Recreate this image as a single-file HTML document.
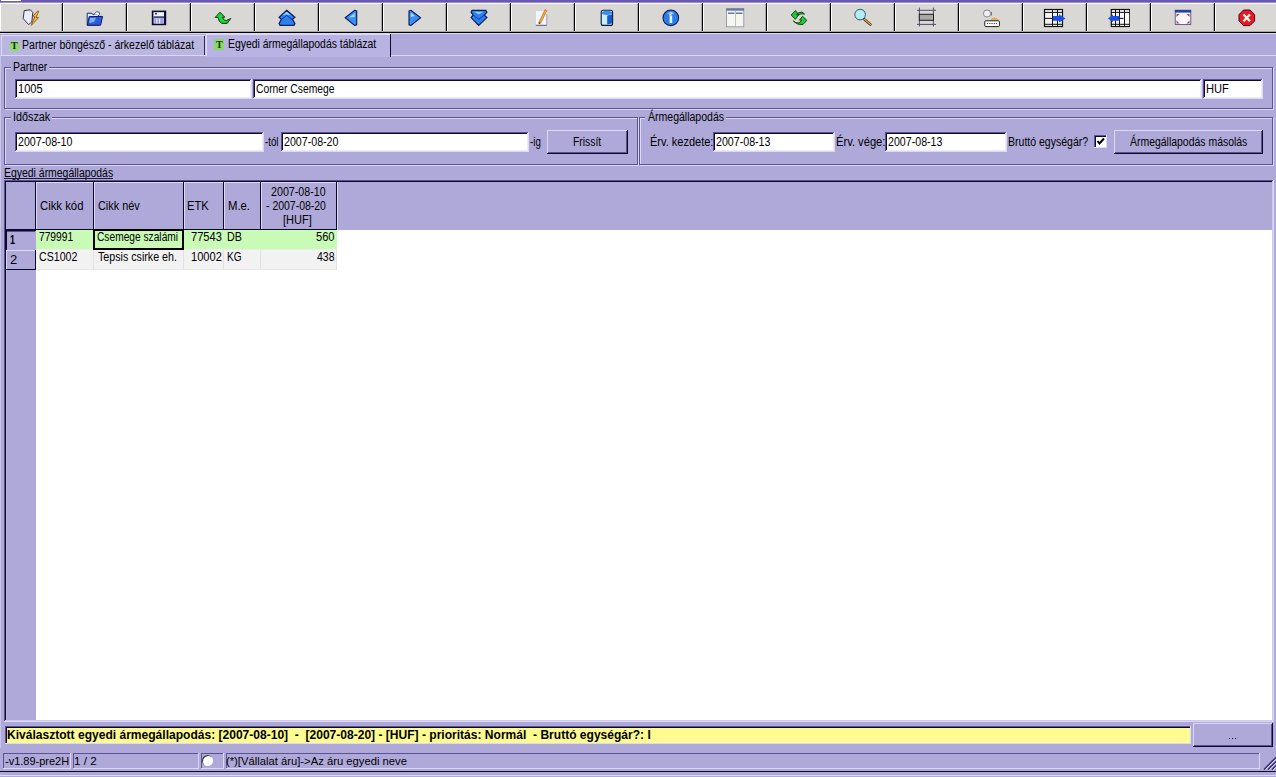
<!DOCTYPE html>
<html><head><meta charset="utf-8"><style>
html,body{margin:0;padding:0}
body{width:1276px;height:777px;position:relative;overflow:hidden;background:#aea9d9;font-family:"Liberation Sans", sans-serif;font-size:12px;color:#000}
body>div,body>span,body>svg{position:absolute}
.t{white-space:pre;line-height:14px;transform-origin:0 0}
</style></head><body>
<div style="left:0px;top:0px;width:1276px;height:2px;background:#6a58b8;"></div>
<div style="left:0px;top:2px;width:1276px;height:1px;background:#9a8ad0;"></div>
<div style="left:1px;top:0px;width:20px;height:1px;background:#ffffff;"></div>
<div style="left:2px;top:1px;width:20px;height:1px;background:#6e6a80;"></div>
<div style="left:0px;top:3px;width:63px;height:30px;background:#d9d8d5;"></div>
<div style="left:0px;top:3px;width:63px;height:1px;background:#ffffff;"></div>
<div style="left:0px;top:3px;width:1px;height:29px;background:#ffffff;"></div>
<div style="left:61px;top:4px;width:1px;height:28px;background:#a8a8a8;"></div>
<div style="left:62px;top:3px;width:1px;height:30px;background:#000;"></div>
<div style="left:0px;top:31px;width:63px;height:1px;background:#a8a8a8;"></div>
<div style="left:0px;top:32px;width:63px;height:1px;background:#000;"></div>
<div style="left:63px;top:3px;width:64px;height:30px;background:#d9d8d5;"></div>
<div style="left:63px;top:3px;width:64px;height:1px;background:#ffffff;"></div>
<div style="left:63px;top:3px;width:1px;height:29px;background:#ffffff;"></div>
<div style="left:125px;top:4px;width:1px;height:28px;background:#a8a8a8;"></div>
<div style="left:126px;top:3px;width:1px;height:30px;background:#000;"></div>
<div style="left:63px;top:31px;width:64px;height:1px;background:#a8a8a8;"></div>
<div style="left:63px;top:32px;width:64px;height:1px;background:#000;"></div>
<div style="left:127px;top:3px;width:64px;height:30px;background:#d9d8d5;"></div>
<div style="left:127px;top:3px;width:64px;height:1px;background:#ffffff;"></div>
<div style="left:127px;top:3px;width:1px;height:29px;background:#ffffff;"></div>
<div style="left:189px;top:4px;width:1px;height:28px;background:#a8a8a8;"></div>
<div style="left:190px;top:3px;width:1px;height:30px;background:#000;"></div>
<div style="left:127px;top:31px;width:64px;height:1px;background:#a8a8a8;"></div>
<div style="left:127px;top:32px;width:64px;height:1px;background:#000;"></div>
<div style="left:191px;top:3px;width:64px;height:30px;background:#d9d8d5;"></div>
<div style="left:191px;top:3px;width:64px;height:1px;background:#ffffff;"></div>
<div style="left:191px;top:3px;width:1px;height:29px;background:#ffffff;"></div>
<div style="left:253px;top:4px;width:1px;height:28px;background:#a8a8a8;"></div>
<div style="left:254px;top:3px;width:1px;height:30px;background:#000;"></div>
<div style="left:191px;top:31px;width:64px;height:1px;background:#a8a8a8;"></div>
<div style="left:191px;top:32px;width:64px;height:1px;background:#000;"></div>
<div style="left:255px;top:3px;width:64px;height:30px;background:#d9d8d5;"></div>
<div style="left:255px;top:3px;width:64px;height:1px;background:#ffffff;"></div>
<div style="left:255px;top:3px;width:1px;height:29px;background:#ffffff;"></div>
<div style="left:317px;top:4px;width:1px;height:28px;background:#a8a8a8;"></div>
<div style="left:318px;top:3px;width:1px;height:30px;background:#000;"></div>
<div style="left:255px;top:31px;width:64px;height:1px;background:#a8a8a8;"></div>
<div style="left:255px;top:32px;width:64px;height:1px;background:#000;"></div>
<div style="left:319px;top:3px;width:64px;height:30px;background:#d9d8d5;"></div>
<div style="left:319px;top:3px;width:64px;height:1px;background:#ffffff;"></div>
<div style="left:319px;top:3px;width:1px;height:29px;background:#ffffff;"></div>
<div style="left:381px;top:4px;width:1px;height:28px;background:#a8a8a8;"></div>
<div style="left:382px;top:3px;width:1px;height:30px;background:#000;"></div>
<div style="left:319px;top:31px;width:64px;height:1px;background:#a8a8a8;"></div>
<div style="left:319px;top:32px;width:64px;height:1px;background:#000;"></div>
<div style="left:383px;top:3px;width:64px;height:30px;background:#d9d8d5;"></div>
<div style="left:383px;top:3px;width:64px;height:1px;background:#ffffff;"></div>
<div style="left:383px;top:3px;width:1px;height:29px;background:#ffffff;"></div>
<div style="left:445px;top:4px;width:1px;height:28px;background:#a8a8a8;"></div>
<div style="left:446px;top:3px;width:1px;height:30px;background:#000;"></div>
<div style="left:383px;top:31px;width:64px;height:1px;background:#a8a8a8;"></div>
<div style="left:383px;top:32px;width:64px;height:1px;background:#000;"></div>
<div style="left:447px;top:3px;width:64px;height:30px;background:#d9d8d5;"></div>
<div style="left:447px;top:3px;width:64px;height:1px;background:#ffffff;"></div>
<div style="left:447px;top:3px;width:1px;height:29px;background:#ffffff;"></div>
<div style="left:509px;top:4px;width:1px;height:28px;background:#a8a8a8;"></div>
<div style="left:510px;top:3px;width:1px;height:30px;background:#000;"></div>
<div style="left:447px;top:31px;width:64px;height:1px;background:#a8a8a8;"></div>
<div style="left:447px;top:32px;width:64px;height:1px;background:#000;"></div>
<div style="left:511px;top:3px;width:64px;height:30px;background:#d9d8d5;"></div>
<div style="left:511px;top:3px;width:64px;height:1px;background:#ffffff;"></div>
<div style="left:511px;top:3px;width:1px;height:29px;background:#ffffff;"></div>
<div style="left:573px;top:4px;width:1px;height:28px;background:#a8a8a8;"></div>
<div style="left:574px;top:3px;width:1px;height:30px;background:#000;"></div>
<div style="left:511px;top:31px;width:64px;height:1px;background:#a8a8a8;"></div>
<div style="left:511px;top:32px;width:64px;height:1px;background:#000;"></div>
<div style="left:575px;top:3px;width:64px;height:30px;background:#d9d8d5;"></div>
<div style="left:575px;top:3px;width:64px;height:1px;background:#ffffff;"></div>
<div style="left:575px;top:3px;width:1px;height:29px;background:#ffffff;"></div>
<div style="left:637px;top:4px;width:1px;height:28px;background:#a8a8a8;"></div>
<div style="left:638px;top:3px;width:1px;height:30px;background:#000;"></div>
<div style="left:575px;top:31px;width:64px;height:1px;background:#a8a8a8;"></div>
<div style="left:575px;top:32px;width:64px;height:1px;background:#000;"></div>
<div style="left:639px;top:3px;width:64px;height:30px;background:#d9d8d5;"></div>
<div style="left:639px;top:3px;width:64px;height:1px;background:#ffffff;"></div>
<div style="left:639px;top:3px;width:1px;height:29px;background:#ffffff;"></div>
<div style="left:701px;top:4px;width:1px;height:28px;background:#a8a8a8;"></div>
<div style="left:702px;top:3px;width:1px;height:30px;background:#000;"></div>
<div style="left:639px;top:31px;width:64px;height:1px;background:#a8a8a8;"></div>
<div style="left:639px;top:32px;width:64px;height:1px;background:#000;"></div>
<div style="left:703px;top:3px;width:64px;height:30px;background:#d9d8d5;"></div>
<div style="left:703px;top:3px;width:64px;height:1px;background:#ffffff;"></div>
<div style="left:703px;top:3px;width:1px;height:29px;background:#ffffff;"></div>
<div style="left:765px;top:4px;width:1px;height:28px;background:#a8a8a8;"></div>
<div style="left:766px;top:3px;width:1px;height:30px;background:#000;"></div>
<div style="left:703px;top:31px;width:64px;height:1px;background:#a8a8a8;"></div>
<div style="left:703px;top:32px;width:64px;height:1px;background:#000;"></div>
<div style="left:767px;top:3px;width:64px;height:30px;background:#d9d8d5;"></div>
<div style="left:767px;top:3px;width:64px;height:1px;background:#ffffff;"></div>
<div style="left:767px;top:3px;width:1px;height:29px;background:#ffffff;"></div>
<div style="left:829px;top:4px;width:1px;height:28px;background:#a8a8a8;"></div>
<div style="left:830px;top:3px;width:1px;height:30px;background:#000;"></div>
<div style="left:767px;top:31px;width:64px;height:1px;background:#a8a8a8;"></div>
<div style="left:767px;top:32px;width:64px;height:1px;background:#000;"></div>
<div style="left:831px;top:3px;width:64px;height:30px;background:#d9d8d5;"></div>
<div style="left:831px;top:3px;width:64px;height:1px;background:#ffffff;"></div>
<div style="left:831px;top:3px;width:1px;height:29px;background:#ffffff;"></div>
<div style="left:893px;top:4px;width:1px;height:28px;background:#a8a8a8;"></div>
<div style="left:894px;top:3px;width:1px;height:30px;background:#000;"></div>
<div style="left:831px;top:31px;width:64px;height:1px;background:#a8a8a8;"></div>
<div style="left:831px;top:32px;width:64px;height:1px;background:#000;"></div>
<div style="left:895px;top:3px;width:64px;height:30px;background:#d9d8d5;"></div>
<div style="left:895px;top:3px;width:64px;height:1px;background:#ffffff;"></div>
<div style="left:895px;top:3px;width:1px;height:29px;background:#ffffff;"></div>
<div style="left:957px;top:4px;width:1px;height:28px;background:#a8a8a8;"></div>
<div style="left:958px;top:3px;width:1px;height:30px;background:#000;"></div>
<div style="left:895px;top:31px;width:64px;height:1px;background:#a8a8a8;"></div>
<div style="left:895px;top:32px;width:64px;height:1px;background:#000;"></div>
<div style="left:959px;top:3px;width:64px;height:30px;background:#d9d8d5;"></div>
<div style="left:959px;top:3px;width:64px;height:1px;background:#ffffff;"></div>
<div style="left:959px;top:3px;width:1px;height:29px;background:#ffffff;"></div>
<div style="left:1021px;top:4px;width:1px;height:28px;background:#a8a8a8;"></div>
<div style="left:1022px;top:3px;width:1px;height:30px;background:#000;"></div>
<div style="left:959px;top:31px;width:64px;height:1px;background:#a8a8a8;"></div>
<div style="left:959px;top:32px;width:64px;height:1px;background:#000;"></div>
<div style="left:1023px;top:3px;width:64px;height:30px;background:#d9d8d5;"></div>
<div style="left:1023px;top:3px;width:64px;height:1px;background:#ffffff;"></div>
<div style="left:1023px;top:3px;width:1px;height:29px;background:#ffffff;"></div>
<div style="left:1085px;top:4px;width:1px;height:28px;background:#a8a8a8;"></div>
<div style="left:1086px;top:3px;width:1px;height:30px;background:#000;"></div>
<div style="left:1023px;top:31px;width:64px;height:1px;background:#a8a8a8;"></div>
<div style="left:1023px;top:32px;width:64px;height:1px;background:#000;"></div>
<div style="left:1087px;top:3px;width:64px;height:30px;background:#d9d8d5;"></div>
<div style="left:1087px;top:3px;width:64px;height:1px;background:#ffffff;"></div>
<div style="left:1087px;top:3px;width:1px;height:29px;background:#ffffff;"></div>
<div style="left:1149px;top:4px;width:1px;height:28px;background:#a8a8a8;"></div>
<div style="left:1150px;top:3px;width:1px;height:30px;background:#000;"></div>
<div style="left:1087px;top:31px;width:64px;height:1px;background:#a8a8a8;"></div>
<div style="left:1087px;top:32px;width:64px;height:1px;background:#000;"></div>
<div style="left:1151px;top:3px;width:64px;height:30px;background:#d9d8d5;"></div>
<div style="left:1151px;top:3px;width:64px;height:1px;background:#ffffff;"></div>
<div style="left:1151px;top:3px;width:1px;height:29px;background:#ffffff;"></div>
<div style="left:1213px;top:4px;width:1px;height:28px;background:#a8a8a8;"></div>
<div style="left:1214px;top:3px;width:1px;height:30px;background:#000;"></div>
<div style="left:1151px;top:31px;width:64px;height:1px;background:#a8a8a8;"></div>
<div style="left:1151px;top:32px;width:64px;height:1px;background:#000;"></div>
<div style="left:1215px;top:3px;width:62px;height:30px;background:#d9d8d5;"></div>
<div style="left:1215px;top:3px;width:62px;height:1px;background:#ffffff;"></div>
<div style="left:1215px;top:3px;width:1px;height:29px;background:#ffffff;"></div>
<div style="left:1215px;top:31px;width:62px;height:1px;background:#a8a8a8;"></div>
<div style="left:1215px;top:32px;width:62px;height:1px;background:#000;"></div>
<svg style="left:18px;top:4px;width:24px;height:24px" viewBox="0 0 24 24"><path d="M6.2 6.6 L12.3 5.8 L14.8 8.4 L13.8 18 L10.6 20.6 L5.2 14.6 Z" fill="#ecebfa" stroke="#30305a" stroke-width="1"/>
<path d="M19.8 6.8 L14.3 12.6 L16.8 12.8 L13.2 21.4 L20.6 13.6 L18 13.3 L20.8 7.5 Z" fill="#f2b234" stroke="#8a4a10" stroke-width="0.8"/></svg>
<svg style="left:82px;top:4px;width:24px;height:24px" viewBox="0 0 24 24"><path d="M5.2 9.2 L9.8 9.2 L10.6 10.4 L16.4 10.4 L16.4 21.2 L5.2 21.2 Z" fill="#d8ecff" stroke="#1a2a66" stroke-width="1"/>
<path d="M12 10.4 Q14 6.5 17 8 L17.8 11" fill="#ffffff" stroke="#30305a" stroke-width="0.8"/>
<path d="M7.2 12.6 L20.6 12.4 L18.6 21.2 L5.4 21.2 Z" fill="#2c5ad8" stroke="#0a1a70" stroke-width="1"/>
<path d="M8 14 L14 13.8 L12 18 L7 19 Z" fill="#7fb0f5"/></svg>
<svg style="left:146px;top:4px;width:24px;height:24px" viewBox="0 0 24 24"><rect x="6.6" y="7.4" width="12.8" height="13" fill="#b8bce0" stroke="#0a0a28" stroke-width="1.6"/>
<rect x="7.8" y="8.4" width="10.4" height="4" fill="#f0f4ff"/>
<rect x="7.8" y="12.4" width="10.4" height="1.4" fill="#30305a"/>
<rect x="8.6" y="14.2" width="8.8" height="5.4" fill="#9ea2d8"/>
<rect x="10.2" y="14.5" width="1.2" height="5" fill="#e8e8ff"/><rect x="13" y="14.5" width="1.2" height="5" fill="#e8e8ff"/>
<rect x="18" y="8" width="1.6" height="12.6" fill="#0a0a40"/>
<circle cx="10" cy="9.8" r="1" fill="#303050"/></svg>
<svg style="left:210px;top:4px;width:24px;height:24px" viewBox="0 0 24 24"><path d="M5.2 13.4 L10 8.2 L14.8 13.2 L12.6 13.4 Q13 16.6 16.4 16.6 L20.8 14.4 L17.2 19.4 L11.6 19.4 Q8.6 17.4 8 13.4 Z" fill="#22d040" stroke="#063a0a" stroke-width="1"/></svg>
<svg style="left:274px;top:4px;width:24px;height:24px" viewBox="0 0 24 24"><path d="M12.7 6.2 L20.9 13.2 L18.4 15.4 L20.9 19.6 L20 21.3 L6 21.3 L5.1 19.6 L7.2 15.4 L5.1 13.2 Z" fill="#2e7ff0" stroke="#0a1e5a" stroke-width="1.2"/>
<path d="M7.4 15.6 L12.7 11.4 L18.2 15.6" fill="none" stroke="#0a3a9a" stroke-width="1"/>
<path d="M12.7 7.8 L17 11.6 L12.7 10.2 L8.4 11.6 Z" fill="#a8dcff"/></svg>
<svg style="left:338px;top:4px;width:24px;height:24px" viewBox="0 0 24 24"><path d="M7.2 13.8 L16.6 6.3 L18.7 7 L18.7 20.8 L16.6 21.4 Z" fill="#3a8ef2" stroke="#071a5c" stroke-width="1.1"/>
<path d="M11 13.5 L16.8 9 L16.8 13 Z" fill="#9ed4ff"/></svg>
<svg style="left:402px;top:4px;width:24px;height:24px" viewBox="0 0 24 24"><path d="M7 7 L9 6.3 L18.6 13.8 L9 21.4 L7 20.8 Z" fill="#3a8ef2" stroke="#071a5c" stroke-width="1.1"/>
<path d="M8.8 8.5 L13 12 L8.8 13 Z" fill="#a8dcff"/></svg>
<svg style="left:466px;top:4px;width:24px;height:24px" viewBox="0 0 24 24"><path d="M6 6.4 L19.8 6.4 L20.9 8.2 L18.4 11.2 L20.9 13.6 L12.7 21.4 L5.1 13.6 L7.2 11.2 L5.1 8.2 Z" fill="#2e7ff0" stroke="#0a1e5a" stroke-width="1.2"/>
<path d="M7.4 11.2 L12.7 15.4 L18.2 11.2" fill="none" stroke="#0a3a9a" stroke-width="1"/>
<path d="M8 7.8 L17.5 7.8 L12.7 10.6 Z" fill="#8cc8ff"/></svg>
<svg style="left:530px;top:4px;width:24px;height:24px" viewBox="0 0 24 24"><rect x="6" y="7" width="11" height="14.5" fill="#f4f6ff"/>
<rect x="5.8" y="20.8" width="11" height="1" fill="#50507a"/>
<rect x="16.4" y="10" width="0.8" height="11" fill="#8888a8"/>
<path d="M15 5.6 L17 6.6 L10.5 19.4 L8.8 19.8 L9 18 Z" fill="#f0a838" stroke="#b86a18" stroke-width="0.6"/>
<circle cx="9.4" cy="19" r="0.8" fill="#404040"/></svg>
<svg style="left:594px;top:4px;width:24px;height:24px" viewBox="0 0 24 24"><rect x="7.2" y="6.2" width="11.4" height="15.2" rx="2" fill="#c8f0ff" stroke="#101838" stroke-width="1.1"/>
<path d="M8 8 Q13 5.5 18 8 L18 10 Q13 12 8 10 Z" fill="#3c8ef0"/>
<path d="M13.2 11.5 L18 10.5 L18 19.5 L13.2 20.5 Z" fill="#1a5ad0"/></svg>
<svg style="left:658px;top:4px;width:24px;height:24px" viewBox="0 0 24 24"><circle cx="12.8" cy="13.8" r="7.8" fill="#2f7ee8" stroke="#071a5c" stroke-width="1.1"/>
<path d="M9 10 Q12.8 6 16.5 10 Q12.8 8.5 9 10 Z" fill="#b8e4ff"/>
<rect x="11.6" y="11.5" width="2.6" height="7.5" fill="#e8f6ff"/>
<path d="M11.2 11.2 L14.4 9.2" stroke="#e8f6ff" stroke-width="1.2"/></svg>
<svg style="left:722px;top:4px;width:24px;height:24px" viewBox="0 0 24 24"><rect x="4.4" y="4.6" width="17.4" height="18.2" fill="#f6f6f0" stroke="#8a8aa8" stroke-width="0.8"/>
<rect x="4.2" y="4.5" width="17.8" height="2.2" fill="#6a74b0"/>
<rect x="6" y="8.6" width="6.5" height="1.2" fill="#4a5a70"/><rect x="14" y="8.6" width="6.5" height="1.2" fill="#4a5a70"/>
<rect x="13" y="7" width="0.8" height="15.5" fill="#b0b8c0"/></svg>
<svg style="left:786px;top:4px;width:24px;height:24px" viewBox="0 0 24 24"><path d="M5.2 11 L9.5 6.5 L12.5 10.6 L10.6 11 Q11 8.5 16 8 L18.5 10 Q14 9 12.2 11.5 L9.3 15.3 Z" fill="#22c83a" stroke="#063a0a" stroke-width="0.9"/>
<path d="M20.8 16.3 L16.5 12.3 L13.5 16 L15.5 16 Q15 19 10 19 L7.3 17 Q11.5 21.5 17 20.5 Z" fill="#22c83a" stroke="#063a0a" stroke-width="0.9"/></svg>
<svg style="left:850px;top:4px;width:24px;height:24px" viewBox="0 0 24 24"><circle cx="10.1" cy="10.6" r="5.3" fill="#b4ecf4" stroke="#2a5a6a" stroke-width="1"/>
<path d="M14.5 15.4 L20.4 20.4" stroke="#4a3010" stroke-width="2.6" stroke-linecap="round"/>
<path d="M14.5 15.4 L20.4 20.4" stroke="#e8b860" stroke-width="1.2" stroke-linecap="round"/></svg>
<svg style="left:914px;top:4px;width:24px;height:24px" viewBox="0 0 24 24"><path d="M5.4 3.6 L5.4 22.4 M19.4 3.6 L19.4 22.4 M3 6.3 L22 6.3 M3 20.4 L22 20.4" stroke="#505068" stroke-width="1"/>
<rect x="5.3" y="10.3" width="14.2" height="6" fill="#a8a8a8" stroke="#202020" stroke-width="1"/></svg>
<svg style="left:978px;top:4px;width:24px;height:24px" viewBox="0 0 24 24"><circle cx="9" cy="9.5" r="3.6" fill="#f0f0f0" stroke="#707080" stroke-width="0.8"/>
<path d="M13.4 8 L13.4 11.5" stroke="#505060" stroke-width="0.8"/>
<path d="M12 16 Q16 11 21 16 Z" fill="#e8a848"/>
<rect x="6.8" y="16.8" width="14.6" height="5.8" rx="1" fill="#ffffff" stroke="#202020" stroke-width="1"/>
<path d="M9 19.5 L19 19.5" stroke="#404040" stroke-width="1" stroke-dasharray="1.2 1"/></svg>
<svg style="left:1042px;top:4px;width:24px;height:24px" viewBox="0 0 24 24"><rect x="2.5" y="5.5" width="18" height="17" fill="#f4f4f4" stroke="#101010" stroke-width="1.2"/>
<path d="M10.5 5.5 L10.5 22.5 M15.5 5.5 L15.5 22.5 M2.5 8.4 L20.5 8.4 M2.5 14.4 L20.5 14.4 M2.5 20.3 L20.5 20.3" stroke="#101010" stroke-width="1"/>
<path d="M10.8 12 L17 12 L17 10.2 L23.6 14.4 L17 18.6 L17 16.8 L10.8 16.8 Z" fill="#1a50e8"/></svg>
<svg style="left:1106px;top:4px;width:24px;height:24px" viewBox="0 0 24 24"><rect x="5.3" y="5.5" width="18.5" height="17" fill="#f8f8f8" stroke="#101010" stroke-width="1.2"/>
<path d="M9.5 5.5 L9.5 22.5 M13.5 5.5 L13.5 22.5 M18.5 5.5 L18.5 22.5 M5.3 8.4 L23.8 8.4 M5.3 20.3 L23.8 20.3" stroke="#101010" stroke-width="1"/>
<path d="M13.6 12 L7 12 L7 10.5 L2 14.4 L7 18.3 L7 16.8 L13.6 16.8 Z" fill="#1a50e8"/>
<path d="M13.6 14.4 L17.5 14.4" stroke="#000" stroke-width="1"/></svg>
<svg style="left:1170px;top:4px;width:24px;height:24px" viewBox="0 0 24 24"><rect x="5.2" y="6.2" width="15.6" height="14.4" fill="#fff4f8" stroke="#404070" stroke-width="0.8"/>
<rect x="5" y="6" width="16" height="2.6" fill="#2040b0"/>
<path d="M6.5 10 L9.5 10 L6.5 13 Z M19.5 10 L16.5 10 L19.5 13 Z M6.5 19.5 L9.5 19.5 L6.5 16.5 Z M19.5 19.5 L16.5 19.5 L19.5 16.5 Z" fill="#9a4a5a"/></svg>
<svg style="left:1234px;top:4px;width:24px;height:24px" viewBox="0 0 24 24"><path d="M9.5 6 L16 6 L20.6 10.6 L20.6 17 L16 21.6 L9.5 21.6 L5 17 L5 10.6 Z" fill="#e41a28" stroke="#5a0008" stroke-width="1"/>
<path d="M9.5 10.4 L16 17.2 M16 10.4 L9.5 17.2" stroke="#fff4e8" stroke-width="2.2"/></svg>
<div style="left:0px;top:33px;width:1276px;height:1px;background:#dcd8f6;"></div>
<div style="left:0px;top:56px;width:1px;height:692px;background:#c8c4ea;"></div>
<div style="left:0px;top:35px;width:205px;height:20px;background:#bab6e2;"></div>
<div style="left:1px;top:35px;width:203px;height:1px;background:#dcd8f6;"></div>
<div style="left:1px;top:35px;width:1px;height:20px;background:#dcd8f6;"></div>
<div style="left:204px;top:36px;width:1px;height:19px;background:#2c2660;"></div>
<div style="left:205px;top:35px;width:1px;height:20px;background:#d0ccf0;"></div>
<div style="left:0px;top:55px;width:206px;height:1px;background:#dcd8f6;"></div>
<div style="left:206px;top:34px;width:184px;height:23px;background:#b8b3e2;"></div>
<div style="left:206px;top:34px;width:184px;height:1px;background:#dcd8f6;"></div>
<div style="left:206px;top:34px;width:1px;height:22px;background:#dcd8f6;"></div>
<div style="left:390px;top:34px;width:1px;height:23px;background:#0c0a28;"></div>
<div style="left:391px;top:55px;width:885px;height:1px;background:#dcd8f6;"></div>
<div style="left:9px;top:41px;width:11px;height:11px;border-radius:50%;background:#98d47a"></div>
<span class="t" style="left:11px;top:39px;font-family:'Liberation Serif',serif;font-weight:bold;font-size:10px;color:#0a3a05">T</span>
<div style="left:214px;top:39px;width:10px;height:11px;background:#8fd66a;"></div>
<span class="t" style="left:216px;top:38px;font-family:'Liberation Serif',serif;font-weight:bold;font-size:10px;color:#0a3a05">T</span>
<span class="t" style="left:22.02px;top:38px;font-size:12px;font-weight:normal;color:#000;transform:scaleX(0.8774);">Partner böngésző - árkezelő táblázat</span>
<span class="t" style="left:228.13px;top:37px;font-size:12px;font-weight:normal;color:#000;transform:scaleX(0.8682);">Egyedi ármegállapodás táblázat</span>
<div style="left:5px;top:68px;width:1269px;height:1px;background:#dcd8f6;"></div>
<div style="left:5px;top:68px;width:1px;height:42px;background:#dcd8f6;"></div>
<div style="left:5px;top:109px;width:1269px;height:1px;background:#dcd8f6;"></div>
<div style="left:1273px;top:68px;width:1px;height:42px;background:#dcd8f6;"></div>
<div style="left:4px;top:67px;width:1269px;height:1px;background:#5a5291;"></div>
<div style="left:4px;top:67px;width:1px;height:42px;background:#5a5291;"></div>
<div style="left:4px;top:108px;width:1269px;height:1px;background:#5a5291;"></div>
<div style="left:1272px;top:67px;width:1px;height:42px;background:#5a5291;"></div>
<div style="left:11px;top:60px;width:38px;height:10px;background:#aea9d9;"></div>
<span class="t" style="left:13.13px;top:60px;font-size:12px;font-weight:normal;color:#000;transform:scaleX(0.8684);">Partner</span>
<div style="left:15px;top:79px;width:237px;height:20px;background:#fff;"></div>
<div style="left:15px;top:79px;width:237px;height:1px;background:#5a5291;"></div>
<div style="left:15px;top:79px;width:1px;height:20px;background:#5a5291;"></div>
<div style="left:16px;top:80px;width:235px;height:1px;background:#0c0a28;"></div>
<div style="left:16px;top:80px;width:1px;height:18px;background:#0c0a28;"></div>
<div style="left:15px;top:98px;width:237px;height:1px;background:#dcd8f6;"></div>
<div style="left:251px;top:79px;width:1px;height:20px;background:#dcd8f6;"></div>
<div style="left:16px;top:97px;width:235px;height:1px;background:#ecebf6;"></div>
<div style="left:250px;top:80px;width:1px;height:18px;background:#ecebf6;"></div>
<div style="left:253px;top:79px;width:949px;height:20px;background:#fff;"></div>
<div style="left:253px;top:79px;width:949px;height:1px;background:#5a5291;"></div>
<div style="left:253px;top:79px;width:1px;height:20px;background:#5a5291;"></div>
<div style="left:254px;top:80px;width:947px;height:1px;background:#0c0a28;"></div>
<div style="left:254px;top:80px;width:1px;height:18px;background:#0c0a28;"></div>
<div style="left:253px;top:98px;width:949px;height:1px;background:#dcd8f6;"></div>
<div style="left:1201px;top:79px;width:1px;height:20px;background:#dcd8f6;"></div>
<div style="left:254px;top:97px;width:947px;height:1px;background:#ecebf6;"></div>
<div style="left:1200px;top:80px;width:1px;height:18px;background:#ecebf6;"></div>
<div style="left:1203px;top:79px;width:60px;height:20px;background:#fff;"></div>
<div style="left:1203px;top:79px;width:60px;height:1px;background:#5a5291;"></div>
<div style="left:1203px;top:79px;width:1px;height:20px;background:#5a5291;"></div>
<div style="left:1204px;top:80px;width:58px;height:1px;background:#0c0a28;"></div>
<div style="left:1204px;top:80px;width:1px;height:18px;background:#0c0a28;"></div>
<div style="left:1203px;top:98px;width:60px;height:1px;background:#dcd8f6;"></div>
<div style="left:1262px;top:79px;width:1px;height:20px;background:#dcd8f6;"></div>
<div style="left:1204px;top:97px;width:58px;height:1px;background:#ecebf6;"></div>
<div style="left:1261px;top:80px;width:1px;height:18px;background:#ecebf6;"></div>
<span class="t" style="left:18.08px;top:82px;font-size:12px;font-weight:normal;color:#000;transform:scaleX(0.9200);">1005</span>
<span class="t" style="left:255.94px;top:82px;font-size:12px;font-weight:normal;color:#000;transform:scaleX(0.8578);">Corner Csemege</span>
<span class="t" style="left:1205.67px;top:82px;font-size:12px;font-weight:normal;color:#000;transform:scaleX(0.9261);">HUF</span>
<div style="left:5px;top:118px;width:634px;height:1px;background:#dcd8f6;"></div>
<div style="left:5px;top:118px;width:1px;height:48px;background:#dcd8f6;"></div>
<div style="left:5px;top:165px;width:634px;height:1px;background:#dcd8f6;"></div>
<div style="left:638px;top:118px;width:1px;height:48px;background:#dcd8f6;"></div>
<div style="left:4px;top:117px;width:634px;height:1px;background:#5a5291;"></div>
<div style="left:4px;top:117px;width:1px;height:48px;background:#5a5291;"></div>
<div style="left:4px;top:164px;width:634px;height:1px;background:#5a5291;"></div>
<div style="left:637px;top:117px;width:1px;height:48px;background:#5a5291;"></div>
<div style="left:11px;top:110px;width:41px;height:10px;background:#aea9d9;"></div>
<span class="t" style="left:12.50px;top:110px;font-size:12px;font-weight:normal;color:#000;transform:scaleX(0.9000);">Időszak</span>
<div style="left:15px;top:132px;width:249px;height:20px;background:#fff;"></div>
<div style="left:15px;top:132px;width:249px;height:1px;background:#5a5291;"></div>
<div style="left:15px;top:132px;width:1px;height:20px;background:#5a5291;"></div>
<div style="left:16px;top:133px;width:247px;height:1px;background:#0c0a28;"></div>
<div style="left:16px;top:133px;width:1px;height:18px;background:#0c0a28;"></div>
<div style="left:15px;top:151px;width:249px;height:1px;background:#dcd8f6;"></div>
<div style="left:263px;top:132px;width:1px;height:20px;background:#dcd8f6;"></div>
<div style="left:16px;top:150px;width:247px;height:1px;background:#ecebf6;"></div>
<div style="left:262px;top:133px;width:1px;height:18px;background:#ecebf6;"></div>
<div style="left:281px;top:132px;width:248px;height:20px;background:#fff;"></div>
<div style="left:281px;top:132px;width:248px;height:1px;background:#5a5291;"></div>
<div style="left:281px;top:132px;width:1px;height:20px;background:#5a5291;"></div>
<div style="left:282px;top:133px;width:246px;height:1px;background:#0c0a28;"></div>
<div style="left:282px;top:133px;width:1px;height:18px;background:#0c0a28;"></div>
<div style="left:281px;top:151px;width:248px;height:1px;background:#dcd8f6;"></div>
<div style="left:528px;top:132px;width:1px;height:20px;background:#dcd8f6;"></div>
<div style="left:282px;top:150px;width:246px;height:1px;background:#ecebf6;"></div>
<div style="left:527px;top:133px;width:1px;height:18px;background:#ecebf6;"></div>
<span class="t" style="left:17.91px;top:135px;font-size:12px;font-weight:normal;color:#000;transform:scaleX(0.8867);">2007-08-10</span>
<span class="t" style="left:264.90px;top:135px;font-size:12px;font-weight:normal;color:#000;transform:scaleX(0.8063);">-tól</span>
<span class="t" style="left:284.01px;top:135px;font-size:12px;font-weight:normal;color:#000;transform:scaleX(0.8867);">2007-08-20</span>
<span class="t" style="left:529.50px;top:135px;font-size:12px;font-weight:normal;color:#000;transform:scaleX(0.8077);">-ig</span>
<div style="left:547px;top:130px;width:81px;height:24px;background:#aea9d9;"></div>
<div style="left:547px;top:130px;width:81px;height:1px;background:#dcd8f6;"></div>
<div style="left:547px;top:130px;width:1px;height:24px;background:#dcd8f6;"></div>
<div style="left:547px;top:153px;width:81px;height:1px;background:#0c0a28;"></div>
<div style="left:627px;top:130px;width:1px;height:24px;background:#0c0a28;"></div>
<div style="left:548px;top:152px;width:79px;height:1px;background:#5a5291;"></div>
<div style="left:626px;top:131px;width:1px;height:22px;background:#5a5291;"></div>
<span class="t" style="left:572.54px;top:135px;font-size:12px;font-weight:normal;color:#000;transform:scaleX(0.8625);">Frissít</span>
<div style="left:640px;top:118px;width:634px;height:1px;background:#dcd8f6;"></div>
<div style="left:640px;top:118px;width:1px;height:48px;background:#dcd8f6;"></div>
<div style="left:640px;top:165px;width:634px;height:1px;background:#dcd8f6;"></div>
<div style="left:1273px;top:118px;width:1px;height:48px;background:#dcd8f6;"></div>
<div style="left:639px;top:117px;width:634px;height:1px;background:#5a5291;"></div>
<div style="left:639px;top:117px;width:1px;height:48px;background:#5a5291;"></div>
<div style="left:639px;top:164px;width:634px;height:1px;background:#5a5291;"></div>
<div style="left:1272px;top:117px;width:1px;height:48px;background:#5a5291;"></div>
<div style="left:645px;top:110px;width:81px;height:10px;background:#aea9d9;"></div>
<span class="t" style="left:647.90px;top:110px;font-size:12px;font-weight:normal;color:#000;transform:scaleX(0.8767);">Ármegállapodás</span>
<span class="t" style="left:649.68px;top:135px;font-size:12px;font-weight:normal;color:#000;transform:scaleX(0.9164);">Érv. kezdete:</span>
<div style="left:713px;top:132px;width:122px;height:20px;background:#fff;"></div>
<div style="left:713px;top:132px;width:122px;height:1px;background:#5a5291;"></div>
<div style="left:713px;top:132px;width:1px;height:20px;background:#5a5291;"></div>
<div style="left:714px;top:133px;width:120px;height:1px;background:#0c0a28;"></div>
<div style="left:714px;top:133px;width:1px;height:18px;background:#0c0a28;"></div>
<div style="left:713px;top:151px;width:122px;height:1px;background:#dcd8f6;"></div>
<div style="left:834px;top:132px;width:1px;height:20px;background:#dcd8f6;"></div>
<div style="left:714px;top:150px;width:120px;height:1px;background:#ecebf6;"></div>
<div style="left:833px;top:133px;width:1px;height:18px;background:#ecebf6;"></div>
<span class="t" style="left:715.91px;top:135px;font-size:12px;font-weight:normal;color:#000;transform:scaleX(0.8867);">2007-08-13</span>
<span class="t" style="left:835.67px;top:135px;font-size:12px;font-weight:normal;color:#000;transform:scaleX(0.9294);">Érv. vége:</span>
<div style="left:885px;top:132px;width:122px;height:20px;background:#fff;"></div>
<div style="left:885px;top:132px;width:122px;height:1px;background:#5a5291;"></div>
<div style="left:885px;top:132px;width:1px;height:20px;background:#5a5291;"></div>
<div style="left:886px;top:133px;width:120px;height:1px;background:#0c0a28;"></div>
<div style="left:886px;top:133px;width:1px;height:18px;background:#0c0a28;"></div>
<div style="left:885px;top:151px;width:122px;height:1px;background:#dcd8f6;"></div>
<div style="left:1006px;top:132px;width:1px;height:20px;background:#dcd8f6;"></div>
<div style="left:886px;top:150px;width:120px;height:1px;background:#ecebf6;"></div>
<div style="left:1005px;top:133px;width:1px;height:18px;background:#ecebf6;"></div>
<span class="t" style="left:887.91px;top:135px;font-size:12px;font-weight:normal;color:#000;transform:scaleX(0.8867);">2007-08-13</span>
<span class="t" style="left:1007.87px;top:135px;font-size:12px;font-weight:normal;color:#000;transform:scaleX(0.8772);">Bruttó egységár?</span>
<div style="left:1094px;top:135px;width:13px;height:13px;background:#fff;"></div>
<div style="left:1094px;top:135px;width:13px;height:1px;background:#5a5291;"></div>
<div style="left:1094px;top:135px;width:1px;height:13px;background:#5a5291;"></div>
<div style="left:1095px;top:136px;width:11px;height:1px;background:#0c0a28;"></div>
<div style="left:1095px;top:136px;width:1px;height:11px;background:#0c0a28;"></div>
<div style="left:1094px;top:147px;width:13px;height:1px;background:#dcd8f6;"></div>
<div style="left:1106px;top:135px;width:1px;height:13px;background:#dcd8f6;"></div>
<svg style="left:1096px;top:137px;width:9px;height:9px" viewBox="0 0 9 9"><path d="M1.5 4 L3.5 6.5 L8 1.5" stroke="#000" stroke-width="2" fill="none"/></svg>
<div style="left:1114px;top:130px;width:149px;height:24px;background:#aea9d9;"></div>
<div style="left:1114px;top:130px;width:149px;height:1px;background:#dcd8f6;"></div>
<div style="left:1114px;top:130px;width:1px;height:24px;background:#dcd8f6;"></div>
<div style="left:1114px;top:153px;width:149px;height:1px;background:#0c0a28;"></div>
<div style="left:1262px;top:130px;width:1px;height:24px;background:#0c0a28;"></div>
<div style="left:1115px;top:152px;width:147px;height:1px;background:#5a5291;"></div>
<div style="left:1261px;top:131px;width:1px;height:22px;background:#5a5291;"></div>
<span class="t" style="left:1130.00px;top:135px;font-size:12px;font-weight:normal;color:#000;transform:scaleX(0.8709);">Ármegállapodás másolás</span>
<span class="t" style="left:4.13px;top:166px;font-size:12px;font-weight:normal;color:#000;transform:scaleX(0.8702);">Egyedi ármegállapodás</span>
<div style="left:4px;top:178px;width:109px;height:1px;background:#1a1640;"></div>
<div style="left:4px;top:180px;width:1270px;height:542px;background:#aea9d9;"></div>
<div style="left:4px;top:180px;width:1270px;height:1px;background:#5a5291;"></div>
<div style="left:4px;top:180px;width:1px;height:542px;background:#5a5291;"></div>
<div style="left:5px;top:181px;width:1268px;height:1px;background:#0c0a28;"></div>
<div style="left:5px;top:181px;width:1px;height:540px;background:#0c0a28;"></div>
<div style="left:4px;top:721px;width:1270px;height:1px;background:#dcd8f6;"></div>
<div style="left:1273px;top:180px;width:1px;height:542px;background:#dcd8f6;"></div>
<div style="left:5px;top:720px;width:1268px;height:1px;background:#cdc9ee;"></div>
<div style="left:1272px;top:181px;width:1px;height:540px;background:#cdc9ee;"></div>
<div style="left:36px;top:270px;width:1236px;height:450px;background:#fff;"></div>
<div style="left:337px;top:230px;width:935px;height:40px;background:#fff;"></div>
<div style="left:6px;top:182px;width:30px;height:47px;background:#aea9d9;"></div>
<div style="left:35px;top:182px;width:1px;height:48px;background:#0c0a28;"></div>
<div style="left:36px;top:182px;width:58px;height:47px;background:#aea9d9;"></div>
<div style="left:36px;top:182px;width:57px;height:1px;background:#dcd8f6;"></div>
<div style="left:36px;top:182px;width:1px;height:47px;background:#dcd8f6;"></div>
<div style="left:93px;top:182px;width:1px;height:48px;background:#0c0a28;"></div>
<div style="left:94px;top:182px;width:90px;height:47px;background:#aea9d9;"></div>
<div style="left:94px;top:182px;width:89px;height:1px;background:#dcd8f6;"></div>
<div style="left:94px;top:182px;width:1px;height:47px;background:#dcd8f6;"></div>
<div style="left:183px;top:182px;width:1px;height:48px;background:#0c0a28;"></div>
<div style="left:184px;top:182px;width:40px;height:47px;background:#aea9d9;"></div>
<div style="left:184px;top:182px;width:39px;height:1px;background:#dcd8f6;"></div>
<div style="left:184px;top:182px;width:1px;height:47px;background:#dcd8f6;"></div>
<div style="left:223px;top:182px;width:1px;height:48px;background:#0c0a28;"></div>
<div style="left:224px;top:182px;width:37px;height:47px;background:#aea9d9;"></div>
<div style="left:224px;top:182px;width:36px;height:1px;background:#dcd8f6;"></div>
<div style="left:224px;top:182px;width:1px;height:47px;background:#dcd8f6;"></div>
<div style="left:260px;top:182px;width:1px;height:48px;background:#0c0a28;"></div>
<div style="left:261px;top:182px;width:76px;height:47px;background:#aea9d9;"></div>
<div style="left:261px;top:182px;width:75px;height:1px;background:#dcd8f6;"></div>
<div style="left:261px;top:182px;width:1px;height:47px;background:#dcd8f6;"></div>
<div style="left:336px;top:182px;width:1px;height:48px;background:#0c0a28;"></div>
<div style="left:6px;top:229px;width:331px;height:1px;background:#0c0a28;"></div>
<div style="left:337px;top:182px;width:1px;height:48px;background:#dcd8f6;"></div>
<span class="t" style="left:39.81px;top:199px;font-size:12px;font-weight:normal;color:#000;transform:scaleX(0.9443);">Cikk kód</span>
<span class="t" style="left:97.79px;top:199px;font-size:12px;font-weight:normal;color:#000;transform:scaleX(0.9067);">Cikk név</span>
<span class="t" style="left:187.37px;top:199px;font-size:12px;font-weight:normal;color:#000;transform:scaleX(0.9318);">ETK</span>
<span class="t" style="left:227.56px;top:199px;font-size:12px;font-weight:normal;color:#000;transform:scaleX(0.9429);">M.e.</span>
<span class="t" style="left:271.01px;top:185px;font-size:12px;font-weight:normal;color:#000;transform:scaleX(0.8900);">2007-08-10</span>
<span class="t" style="left:266.00px;top:199px;font-size:12px;font-weight:normal;color:#000;transform:scaleX(0.8721);">- 2007-08-20</span>
<span class="t" style="left:282.98px;top:213px;font-size:12px;font-weight:normal;color:#000;transform:scaleX(0.9167);">[HUF]</span>
<div style="left:36px;top:230px;width:301px;height:19px;background:#c9fbb6;"></div>
<div style="left:36px;top:249px;width:301px;height:1px;background:#e6f0e0;"></div>
<div style="left:36px;top:250px;width:301px;height:19px;background:#f2f2f2;"></div>
<div style="left:36px;top:269px;width:301px;height:1px;background:#e8e8e8;"></div>
<div style="left:93px;top:250px;width:1px;height:19px;background:#e2e2e2;"></div>
<div style="left:183px;top:250px;width:1px;height:19px;background:#e2e2e2;"></div>
<div style="left:223px;top:250px;width:1px;height:19px;background:#e2e2e2;"></div>
<div style="left:260px;top:250px;width:1px;height:19px;background:#e2e2e2;"></div>
<div style="left:336px;top:250px;width:1px;height:20px;background:#e2e2e2;"></div>
<div style="left:6px;top:230px;width:30px;height:20px;background:#aea9d9;"></div>
<div style="left:6px;top:230px;width:30px;height:1px;background:#0c0a28;"></div>
<div style="left:6px;top:230px;width:1px;height:20px;background:#0c0a28;"></div>
<div style="left:7px;top:231px;width:28px;height:1px;background:#5a5291;"></div>
<div style="left:6px;top:250px;width:30px;height:20px;background:#aea9d9;"></div>
<div style="left:6px;top:250px;width:29px;height:1px;background:#dcd8f6;"></div>
<div style="left:6px;top:250px;width:1px;height:19px;background:#dcd8f6;"></div>
<div style="left:35px;top:250px;width:1px;height:20px;background:#0c0a28;"></div>
<div style="left:6px;top:269px;width:30px;height:1px;background:#0c0a28;"></div>
<div style="left:6px;top:270px;width:30px;height:450px;background:#aea9d9;"></div>
<div style="left:6px;top:270px;width:1px;height:450px;background:#bcb8dc;"></div>
<span class="t" style="left:10.05px;top:233px;font-size:12px;font-weight:bold;color:#000;transform:scaleX(0.7500);">1</span>
<span class="t" style="left:9.72px;top:253px;font-size:12px;font-weight:normal;color:#000;transform:scaleX(1.0800);">2</span>
<div style="left:93px;top:229px;width:91px;height:21px;box-sizing:border-box;border:2px solid #000"></div>
<span class="t" style="left:39.35px;top:230px;font-size:12px;font-weight:normal;color:#000;transform:scaleX(0.8513);">779991</span>
<span class="t" style="left:97.15px;top:230px;font-size:12px;font-weight:normal;color:#000;transform:scaleX(0.8500);">Csemege szalámi</span>
<span class="t" style="left:190.97px;top:230px;font-size:12px;font-weight:normal;color:#000;transform:scaleX(0.9250);">77543</span>
<span class="t" style="left:226.91px;top:230px;font-size:12px;font-weight:normal;color:#000;transform:scaleX(0.8933);">DB</span>
<span class="t" style="left:315.77px;top:230px;font-size:12px;font-weight:normal;color:#000;transform:scaleX(0.9263);">560</span>
<span class="t" style="left:39.01px;top:250px;font-size:12px;font-weight:normal;color:#000;transform:scaleX(0.8857);">CS1002</span>
<span class="t" style="left:98.00px;top:250px;font-size:12px;font-weight:normal;color:#000;transform:scaleX(0.8898);">Tepsis csirke eh.</span>
<span class="t" style="left:190.97px;top:250px;font-size:12px;font-weight:normal;color:#000;transform:scaleX(0.9250);">10002</span>
<span class="t" style="left:226.96px;top:250px;font-size:12px;font-weight:normal;color:#000;transform:scaleX(0.8375);">KG</span>
<span class="t" style="left:316.70px;top:250px;font-size:12px;font-weight:normal;color:#000;transform:scaleX(0.8800);">438</span>
<div style="left:5px;top:726px;width:1186px;height:18px;background:#fefc90;"></div>
<div style="left:5px;top:726px;width:1186px;height:1px;background:#5a5291;"></div>
<div style="left:5px;top:726px;width:1px;height:18px;background:#5a5291;"></div>
<div style="left:6px;top:727px;width:1184px;height:1px;background:#0c0a28;"></div>
<div style="left:6px;top:727px;width:1px;height:16px;background:#0c0a28;"></div>
<div style="left:5px;top:743px;width:1186px;height:1px;background:#dcd8f6;"></div>
<div style="left:1190px;top:726px;width:1px;height:18px;background:#dcd8f6;"></div>
<span class="t" style="left:7.00px;top:728px;font-size:12px;font-weight:bold;color:#000;transform:scaleX(1.0036);white-space:pre;">Kiválasztott egyedi ármegállapodás: [2007-08-10]  -  [2007-08-20] - [HUF] - prioritás: Normál  - Bruttó egységár?: I</span>
<div style="left:1193px;top:723px;width:80px;height:24px;background:#aea9d9;"></div>
<div style="left:1193px;top:723px;width:80px;height:1px;background:#dcd8f6;"></div>
<div style="left:1193px;top:723px;width:1px;height:24px;background:#dcd8f6;"></div>
<div style="left:1193px;top:746px;width:80px;height:1px;background:#0c0a28;"></div>
<div style="left:1272px;top:723px;width:1px;height:24px;background:#0c0a28;"></div>
<div style="left:1194px;top:745px;width:78px;height:1px;background:#5a5291;"></div>
<div style="left:1271px;top:724px;width:1px;height:22px;background:#5a5291;"></div>
<div style="left:1229px;top:738px;width:1px;height:1px;background:#000;"></div>
<div style="left:1232px;top:738px;width:1px;height:1px;background:#000;"></div>
<div style="left:1235px;top:738px;width:1px;height:1px;background:#000;"></div>
<div style="left:3px;top:753px;width:1px;height:15px;background:#5a5291;"></div>
<div style="left:3px;top:753px;width:68px;height:1px;background:#5a5291;"></div>
<div style="left:70px;top:753px;width:1px;height:16px;background:#dcd8f6;"></div>
<div style="left:3px;top:768px;width:68px;height:1px;background:#dcd8f6;"></div>
<div style="left:73px;top:753px;width:1px;height:15px;background:#5a5291;"></div>
<div style="left:73px;top:753px;width:126px;height:1px;background:#5a5291;"></div>
<div style="left:198px;top:753px;width:1px;height:16px;background:#dcd8f6;"></div>
<div style="left:73px;top:768px;width:126px;height:1px;background:#dcd8f6;"></div>
<div style="left:201px;top:753px;width:1px;height:15px;background:#5a5291;"></div>
<div style="left:201px;top:753px;width:23px;height:1px;background:#5a5291;"></div>
<div style="left:223px;top:753px;width:1px;height:16px;background:#dcd8f6;"></div>
<div style="left:201px;top:768px;width:23px;height:1px;background:#dcd8f6;"></div>
<div style="left:226px;top:753px;width:1px;height:15px;background:#5a5291;"></div>
<div style="left:226px;top:753px;width:1034px;height:1px;background:#5a5291;"></div>
<div style="left:1259px;top:753px;width:1px;height:16px;background:#dcd8f6;"></div>
<div style="left:226px;top:768px;width:1034px;height:1px;background:#dcd8f6;"></div>
<span class="t" style="left:5.10px;top:754px;font-size:11px;font-weight:normal;color:#000;transform:scaleX(0.9984);">-v1.89-pre2H</span>
<span class="t" style="left:73.84px;top:754px;font-size:11px;font-weight:normal;color:#000;transform:scaleX(1.0550);">1 / 2</span>
<span class="t" style="left:225.98px;top:754px;font-size:11px;font-weight:normal;color:#000;transform:scaleX(1.0222);">(*)[Vállalat áru]->Az áru egyedi neve</span>
<div style="left:202px;top:755px;width:11px;height:11px;border-radius:50%;background:#fff;box-shadow:inset 1px 1px 0 #333"></div>
<div style="left:0px;top:771px;width:1276px;height:1px;background:#0c0a28;"></div>
<div style="left:0px;top:775px;width:1276px;height:1px;background:#dcd8f6;"></div>
<svg style="left:1263px;top:757px;width:13px;height:13px" viewBox="0 0 13 13"><path d="M13 0.5 L1 12.5 M13 4.5 L5 12.5 M13 8.5 L9 12.5" stroke="#3a3470" stroke-width="1.6"/><path d="M13 2.2 L2.7 12.5 M13 6.2 L6.7 12.5 M13 10.2 L10.7 12.5" stroke="#e0ddf8" stroke-width="1"/></svg>
</body></html>
